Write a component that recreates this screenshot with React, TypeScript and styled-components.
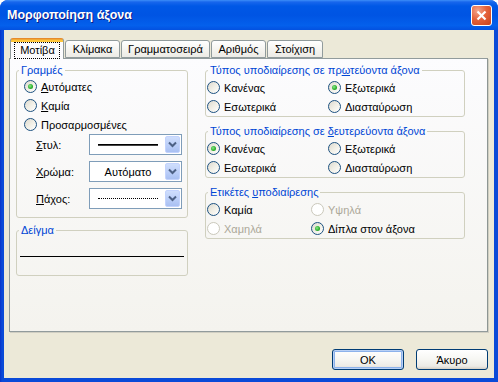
import React from 'react';
import styled, { createGlobalStyle } from 'styled-components';

const GlobalStyle = createGlobalStyle`
  html, body {
    margin: 0;
    padding: 0;
    background: #ffffff;
  }
  body {
    font-family: "Liberation Sans", Arial, sans-serif;
    font-size: 11px;
    color: #000000;
  }
`;

const Window = styled.div`
  width: 498px;
  height: 382px;
  display: flex;
  flex-direction: column;
  border-radius: 8px 8px 0 0;
  overflow: hidden;
  background: #0a46d6;
`;

const TitleBar = styled.div`
  height: 30px;
  flex: none;
  display: flex;
  align-items: center;
  justify-content: space-between;
  padding: 0 6px 0 7px;
  background: linear-gradient(
    180deg,
    #3d8ef8 0px,
    #1866ec 2px,
    #0058e6 6px,
    #0054e3 50%,
    #0460ec 85%,
    #0351e0 100%
  );
`;

const Title = styled.span`
  color: #ffffff;
  font-family: "Liberation Sans", Arial, sans-serif;
  font-weight: bold;
  font-size: 12.5px;
  text-shadow: 1px 1px 0 #0a1883;
`;

const CloseButton = styled.div`
  width: 19px;
  height: 19px;
  border: 1px solid #ffffff;
  border-radius: 3px;
  display: flex;
  align-items: center;
  justify-content: center;
  background: radial-gradient(circle at 30% 25%, #f3a58c 0%, #e5633c 45%, #c9411a 100%);
`;

const Frame = styled.div`
  flex: 1;
  display: flex;
  padding: 0 4px 4px 4px;
  background: linear-gradient(90deg, #0832c8 0px, #0a4ad8 2px);
`;

const Body = styled.div`
  flex: 1;
  display: flex;
  flex-direction: column;
  padding: 8px 6px 0 5px;
  background: #ece9d8;
`;

const TabRow = styled.div`
  display: flex;
  align-items: flex-end;
  padding-left: 1px;
  height: 20px;
  position: relative;
  z-index: 1;
`;

const Tab = styled.div<{ $w: number; $active?: boolean }>`
  box-sizing: border-box;
  width: ${p => p.$w}px;
  height: ${p => (p.$active ? 21 : 18)}px;
  margin-bottom: ${p => (p.$active ? -1 : 0)}px;
  margin-right: 1px;
  display: flex;
  align-items: center;
  justify-content: center;
  border: 1px solid #919b9c;
  border-bottom: ${p => (p.$active ? 'none' : '1px solid #919b9c')};
  border-radius: 3px 3px 0 0;
  background: ${p =>
    p.$active
      ? 'linear-gradient(180deg, #e68b2c 0px, #ffc73c 1px, #ffc73c 3px, #fcfcfe 3px)'
      : 'linear-gradient(180deg, #ffffff 0%, #f4f3ee 60%, #ecebe6 100%)'};
  border-top-color: ${p => (p.$active ? '#e68b2c' : '#919b9c')};
  padding-top: ${p => (p.$active ? 2 : 0)}px;
`;

const FocusText = styled.span`
  outline: 1px dotted #000000;
  padding: 1px 4px 2px 5px;
`;

const TabPanel = styled.div`
  box-sizing: border-box;
  height: 274px;
  border: 1px solid #919b9c;
  border-right-color: #8d9693;
  box-shadow: 1px 1px 0 #d0cec2;
  background: linear-gradient(180deg, #fcfcfe 0%, #f4f3ee 100%);
  display: flex;
  gap: 17px;
  padding: 5px 0 0 6px;
`;

const Column = styled.div<{ $w: number; $gap: number }>`
  width: ${p => p.$w}px;
  display: flex;
  flex-direction: column;
  gap: ${p => p.$gap}px;
`;

const Group = styled.fieldset`
  margin: 0;
  padding: 0;
  min-width: 0;
  border: 1px solid #d0d0bf;
  border-radius: 3px;
`;

const Legend = styled.legend`
  margin-left: 2px;
  padding: 0 2px;
  color: #0046d5;
  font-size: 11px;
  line-height: 13px;
`;

const RadioList = styled.div`
  display: flex;
  flex-direction: column;
  padding-left: 7px;
`;

const RadioGrid = styled.div<{ $col: number }>`
  display: grid;
  grid-template-columns: ${p => p.$col}px 1fr;
  grid-auto-rows: 19px;
  padding: 1px 0 0 1px;
`;

const RadioItem = styled.label<{ $disabled?: boolean }>`
  height: 19px;
  display: flex;
  align-items: center;
  gap: 4px;
  color: ${p => (p.$disabled ? '#aca899' : '#000000')};
  white-space: nowrap;
`;

const RadioCircle = styled.span<{ $checked?: boolean; $disabled?: boolean }>`
  box-sizing: border-box;
  width: 13px;
  height: 13px;
  flex: none;
  border-radius: 50%;
  border: 1px solid ${p => (p.$disabled ? '#cac8bb' : '#1c5180')};
  background: ${p =>
    p.$disabled
      ? '#ffffff'
      : 'linear-gradient(135deg, #dcd9cf 0%, #f1efe6 50%, #ffffff 100%)'};
  display: flex;
  align-items: center;
  justify-content: center;

  &::after {
    content: '';
    display: ${p => (p.$checked ? 'block' : 'none')};
    width: 5px;
    height: 5px;
    border-radius: 50%;
    background: radial-gradient(circle at 40% 40%, #8be68b 0%, #2fb22f 55%, #1a8f1a 100%);
  }
`;

const ComboGrid = styled.div`
  display: grid;
  grid-template-columns: 53px 93px;
  grid-auto-rows: 21px;
  row-gap: 6px;
  align-items: center;
  padding: 0 0 8px 19px;
`;

const Combo = styled.div`
  box-sizing: border-box;
  height: 21px;
  border: 1px solid #7f9db9;
  background: #ffffff;
  display: flex;
  align-items: center;
  padding: 1px;
`;

const ComboValue = styled.div`
  flex: 1;
  display: flex;
  align-items: center;
  justify-content: center;
`;

const SolidLine = styled.div`
  width: 60px;
  height: 1px;
  background: #000000;
  border-bottom: 1px solid #444;
`;

const DottedLine = styled.div`
  width: 60px;
  border-bottom: 1px dotted #000000;
`;

const ComboButton = styled.div`
  box-sizing: border-box;
  width: 15px;
  height: 17px;
  border: 1px solid #c3d3fd;
  border-radius: 2px;
  background: linear-gradient(180deg, #cfdefc 0%, #b9cdf8 60%, #a9c0f2 100%);
  display: flex;
  align-items: center;
  justify-content: center;
`;

const SampleLine = styled.div`
  height: 1px;
  background: #000000;
  margin: 19px 3px 18px 3px;
`;

const ButtonRow = styled.div`
  display: flex;
  justify-content: flex-end;
  gap: 12px;
  margin-top: 17px;
`;

const Button = styled.div<{ $default?: boolean }>`
  box-sizing: border-box;
  width: 72px;
  height: 21px;
  border: 1px solid #003c74;
  border-radius: 3px;
  display: flex;
  align-items: center;
  justify-content: center;
  background: linear-gradient(180deg, #ffffff 0%, #f6f6f2 50%, #ecebe6 85%, #d6d0c5 100%);
  box-shadow: ${p => (p.$default ? 'inset 0 0 0 1px #b8d0f5, inset 0 0 0 2px #8cb2eb' : 'none')};
`;

const Chevron = () => (
  <svg width="9" height="7" viewBox="0 0 9 7">
    <path d="M1 1.5 L4.5 5 L8 1.5" fill="none" stroke="#4d6185" strokeWidth="2" />
  </svg>
);

const Radio: React.FC<{ checked?: boolean; disabled?: boolean; children: React.ReactNode }> = ({
  checked,
  disabled,
  children,
}) => (
  <RadioItem $disabled={disabled}>
    <RadioCircle $checked={checked} $disabled={disabled} />
    <span>{children}</span>
  </RadioItem>
);

const tabs = [
  { name: 'Μοτίβα', w: 54 },
  { name: 'Κλίμακα', w: 55 },
  { name: 'Γραμματοσειρά', w: 89 },
  { name: 'Αριθμός', w: 55 },
  { name: 'Στοίχιση', w: 56 },
];

export default function App() {
  return (
    <>
      <GlobalStyle />
      <Window>
        <TitleBar>
          <Title>Μορφοποίηση άξονα</Title>
          <CloseButton>
            <svg width="11" height="11" viewBox="0 0 11 11">
              <path d="M1.5 1.5 L9.5 9.5 M9.5 1.5 L1.5 9.5" stroke="#ffffff" strokeWidth="2.2" />
            </svg>
          </CloseButton>
        </TitleBar>
        <Frame>
          <Body>
            <TabRow>
              {tabs.map((t, i) => (
                <Tab key={t.name} $w={t.w} $active={i === 0}>
                  {i === 0 ? <FocusText>{t.name}</FocusText> : t.name}
                </Tab>
              ))}
            </TabRow>
            <TabPanel>
              <Column $w={172} $gap={6}>
                <Group>
                  <Legend>Γραμμές</Legend>
                  <RadioList>
                    <Radio checked>
                      <u>Α</u>υτόματες
                    </Radio>
                    <Radio>
                      <u>Κ</u>αμία
                    </Radio>
                    <Radio>Προσαρμοσμένες</Radio>
                  </RadioList>
                  <ComboGrid>
                    <span>
                      <u>Σ</u>τυλ:
                    </span>
                    <Combo>
                      <ComboValue>
                        <SolidLine />
                      </ComboValue>
                      <ComboButton>
                        <Chevron />
                      </ComboButton>
                    </Combo>
                    <span>
                      <u>Χ</u>ρώμα:
                    </span>
                    <Combo>
                      <ComboValue>Αυτόματο</ComboValue>
                      <ComboButton>
                        <Chevron />
                      </ComboButton>
                    </Combo>
                    <span>
                      <u>Π</u>άχος:
                    </span>
                    <Combo>
                      <ComboValue>
                        <DottedLine />
                      </ComboValue>
                      <ComboButton>
                        <Chevron />
                      </ComboButton>
                    </Combo>
                  </ComboGrid>
                </Group>
                <Group>
                  <Legend>Δείγμα</Legend>
                  <SampleLine />
                </Group>
              </Column>
              <Column $w={260} $gap={8}>
                <Group>
                  <Legend>
                    Τύπος υποδιαίρεσης σε πρ<u>ω</u>τεύοντα άξονα
                  </Legend>
                  <RadioGrid $col={121}>
                    <Radio>Κανένας</Radio>
                    <Radio checked>Εξωτερικά</Radio>
                    <Radio>Εσωτερικά</Radio>
                    <Radio>Διασταύρωση</Radio>
                  </RadioGrid>
                </Group>
                <Group>
                  <Legend>
                    Τύπος υποδιαίρεσης σε <u>δ</u>ευτερεύοντα άξονα
                  </Legend>
                  <RadioGrid $col={121}>
                    <Radio checked>Κανένας</Radio>
                    <Radio>Εξωτερικά</Radio>
                    <Radio>Εσωτερικά</Radio>
                    <Radio>Διασταύρωση</Radio>
                  </RadioGrid>
                </Group>
                <Group>
                  <Legend>
                    Ετικέτες <u>υ</u>ποδιαίρεσης
                  </Legend>
                  <RadioGrid $col={104}>
                    <Radio>Καμία</Radio>
                    <Radio disabled>Υψηλά</Radio>
                    <Radio disabled>Χαμηλά</Radio>
                    <Radio checked>Δίπλα στον άξονα</Radio>
                  </RadioGrid>
                </Group>
              </Column>
            </TabPanel>
            <ButtonRow>
              <Button $default>OK</Button>
              <Button>Άκυρο</Button>
            </ButtonRow>
          </Body>
        </Frame>
      </Window>
    </>
  );
}
